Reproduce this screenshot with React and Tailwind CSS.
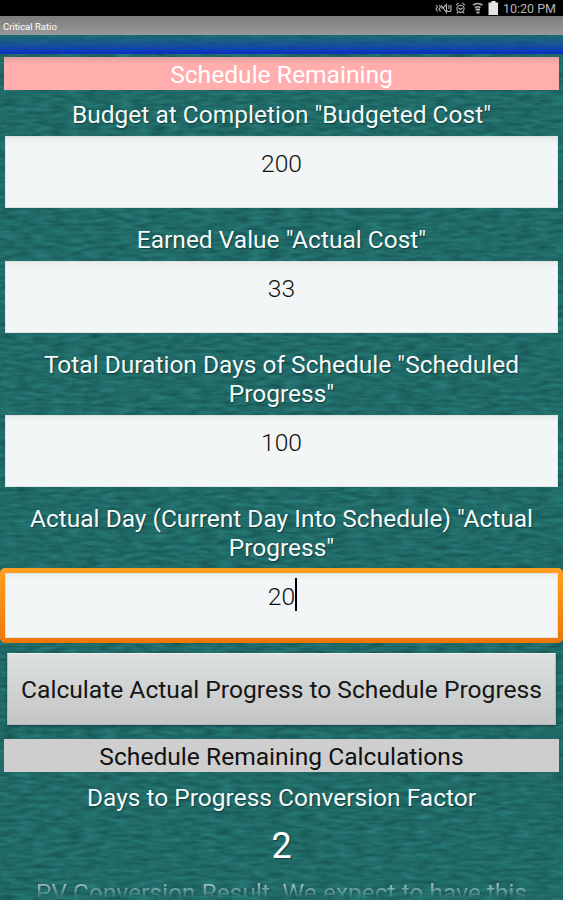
import clsx from 'clsx';

const FIELDS = [
  { id: 'bac', lines: ['Budget at Completion "Budgeted Cost"'], value: '200' },
  { id: 'ev', lines: ['Earned Value "Actual Cost"'], value: '33' },
  { id: 'total', lines: ['Total Duration Days of Schedule "Scheduled', 'Progress"'], value: '100' },
  { id: 'actual', lines: ['Actual Day (Current Day Into Schedule) "Actual', 'Progress"'], value: '20', focused: true },
];

function Texture() {
  return (
    <svg className="absolute inset-0 w-full h-full" aria-hidden="true">
      <filter id="weave" x="0" y="0" width="100%" height="100%" colorInterpolationFilters="sRGB">
        <feTurbulence type="fractalNoise" baseFrequency="0.06 0.26" numOctaves="2" seed="8" />
        <feColorMatrix values="0.1 0 0 0 0.075  0.21 0 0 0 0.31  0.19 0 0 0 0.31  0 0 0 0 1" />
      </filter>
      <rect width="100%" height="100%" filter="url(#weave)" />
    </svg>
  );
}

function StatusBar() {
  return (
    <div className="h-4 shrink-0 bg-black flex items-center justify-end pr-[7px] text-[#b4b4b4]">
      <svg width="64" height="16" viewBox="0 0 64 16" fill="none" stroke="currentColor" strokeWidth="1.1" aria-hidden="true">
        <path d="M1 5l1.500 2L1 9l1.500 2.500M4 5l1.500 2L4 9l1.500 2.500M6 8h2l3.500-3.500v8L6 5M12 10.500c1 1.500 3.500 1.500 4-.5V5M14 5v4" />
        <circle cx="25.500" cy="8.800" r="3.600" />
        <path d="M23.500 8l2 1.500L27.500 8M21 5.200l2.600-2.200M30 5.200l-2.600-2.200M22.800 12l-1 1.500M28.200 12l1 1.500" />
        <path d="M38 5.200c3-2.200 6.500-2.200 9.500 0M40 7.500c2-1.200 3.500-1.200 5.500 0" strokeWidth="1.500" />
        <path d="M40.500 9.500H45M41.500 12.500h3" strokeWidth="1.800" />
        <path d="M53.500 2.500h3V1h4v1.500h2.500V15h-9.500z" fill="#e4e4e4" stroke="none" />
      </svg>
      <span className="ml-1 text-[12.500px] leading-[17px] whitespace-nowrap">10:20 PM</span>
    </div>
  );
}

function Label({ lines }) {
  return (
    <div className="text-center text-[24.5px] leading-[29px] text-[#f4fafa] text-shadow-[1px_1px_1px_#123f3f] whitespace-nowrap">
      {lines.map((line) => (
        <div key={line}>{line}</div>
      ))}
    </div>
  );
}

function Field({ lines, value, focused }) {
  return (
    <div className={clsx(focused ? 'mb-[10px]' : 'mb-[17px]')}>
      <Label lines={lines} />
      <div
        className={clsx(
          'flex justify-center text-[24.6px] leading-[29px] font-light text-[#111]',
          focused
            ? 'mt-[6px] h-[75px] rounded-[5px] bg-gradient-to-b from-[#ff9f20] to-[#ee7608] p-[5px]'
            : 'mt-[7px] mx-[5px] h-[72px]'
        )}
      >
        <div
          className={clsx(
            'flex-1 flex justify-center border border-[#dfe3e2] bg-gradient-to-b from-[#e8eceb] via-[#f2f6f6] via-10% to-[#f2f6f6]',
            focused ? 'pt-[4px]' : 'pt-[12px]'
          )}
        >
          <span className={clsx(focused && 'ml-[2px] h-[33px] pt-[4px] border-r-2 border-black')}>{value}</span>
        </div>
      </div>
    </div>
  );
}

export default function App() {
  return (
    <div className="relative w-[563px] h-[900px] overflow-hidden bg-[#206a67] font-[Roboto,sans-serif]">
      <Texture />
      <div className="relative flex flex-col h-full">
        <StatusBar />
        <div className="h-[19px] shrink-0 bg-gradient-to-b from-[#7c7c7c] to-[#999] pl-[3px] text-[9.500px] leading-[21px] text-white">
          Critical Ratio
        </div>
        <div className="h-[19px] shrink-0 bg-gradient-to-b from-[#176e80]/40 via-[#1749a0]/75 to-[#0c2bcb]" />

        <div className="mt-[3px] mx-1 h-[33px] shrink-0 bg-gradient-to-b from-[#dca0a0] via-[#ffadad] via-20% to-[#ffadad] text-center text-[24.6px] leading-[36px] text-white">
          Schedule Remaining
        </div>

        <div className="mt-[10px]">
          {FIELDS.map((field) => (
            <Field key={field.id} {...field} />
          ))}
        </div>

        <button className="mx-[7px] h-[72px] shrink-0 pt-[2px] border border-[#b5bbba] border-t-[#eef0f0] bg-gradient-to-b from-[#dde0e0] to-[#c3c6c5] shadow-[0_1px_2px_#123f3f] text-[24.6px] text-[#151515] whitespace-nowrap">
          Calculate Actual Progress to Schedule Progress
        </button>

        <div className="mt-[14px] mx-1 mb-[11px] h-[33px] shrink-0 bg-[#cecece] text-center text-[24.6px] leading-[36px] text-[#111]">
          Schedule Remaining Calculations
        </div>

        <Label lines={['Days to Progress Conversion Factor']} />
        <div className="mt-[13px] text-center text-4xl leading-[42px] text-white text-shadow-[1px_1px_1px_#123f3f]">2</div>
        {/* next row scrolls off under the bottom fading edge */}
        <div className="mt-[11px] opacity-60 mask-b-from-20% mask-b-to-70%">
          <Label lines={['PV Conversion Result. We expect to have this']} />
        </div>
      </div>
    </div>
  );
}
